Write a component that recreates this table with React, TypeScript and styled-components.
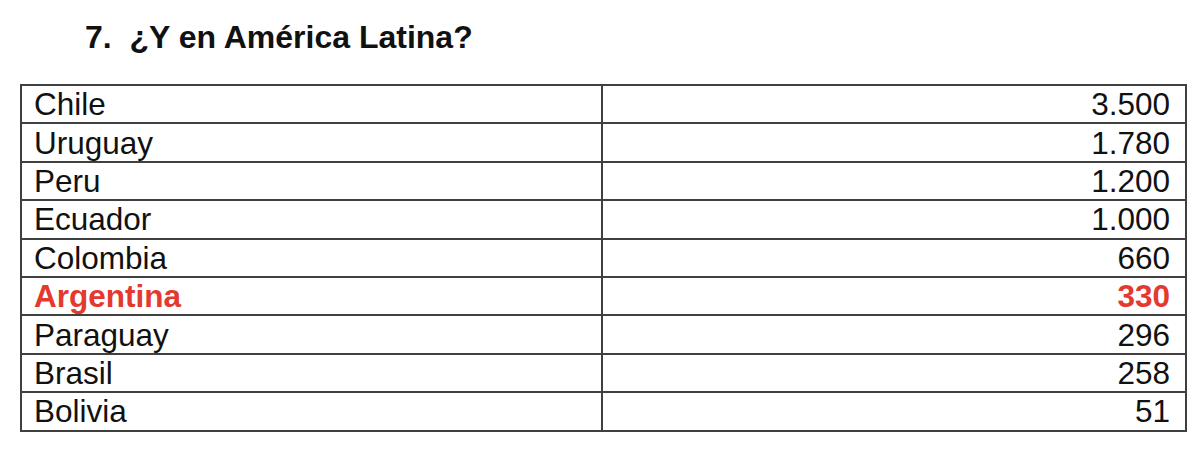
import React from "react";
import styled, { createGlobalStyle } from "styled-components";

const GlobalStyle = createGlobalStyle`
  html, body {
    margin: 0;
    padding: 0;
    background: #fff;
  }
  body {
    font-family: "Liberation Sans", Arial, sans-serif;
    color: #111;
  }
`;

const Page = styled.div`
  width: 1200px;
  height: 455px;
  padding: 19px 0 0 20px;
  box-sizing: border-box;
`;

const Title = styled.h2`
  margin: 0 0 29px 0;
  padding-left: 65px;
  font-size: 32px;
  font-weight: 700;
  line-height: 36px;
  color: #111;
  white-space: pre;
`;

const Table = styled.table`
  width: 1167px;
  border-collapse: collapse;
  table-layout: fixed;
`;

const Row = styled.tr`
  height: 38.4px;
`;

const Cell = styled.td<{ $num?: boolean; $hl?: boolean }>`
  border: 2px solid #404040;
  padding: 0 ${(p) => (p.$num ? "15px" : "0")} 0 ${(p) => (p.$num ? "0" : "12px")};
  width: 50%;
  font-size: 31.5px;
  line-height: 34px;
  text-align: ${(p) => (p.$num ? "right" : "left")};
  color: ${(p) => (p.$hl ? "#e4392f" : "#111")};
  font-weight: ${(p) => (p.$hl ? 700 : 400)};
  vertical-align: middle;
  white-space: nowrap;
`;

const data: { country: string; value: string; hl?: boolean }[] = [
  { country: "Chile", value: "3.500" },
  { country: "Uruguay", value: "1.780" },
  { country: "Peru", value: "1.200" },
  { country: "Ecuador", value: "1.000" },
  { country: "Colombia", value: "660" },
  { country: "Argentina", value: "330", hl: true },
  { country: "Paraguay", value: "296" },
  { country: "Brasil", value: "258" },
  { country: "Bolivia", value: "51" },
];

export default function App() {
  return (
    <>
      <GlobalStyle />
      <Page>
        <Title>{"7.  ¿Y en América Latina?"}</Title>
        <Table>
          <tbody>
            {data.map((d) => (
              <Row key={d.country}>
                <Cell $hl={d.hl}>{d.country}</Cell>
                <Cell $num $hl={d.hl}>
                  {d.value}
                </Cell>
              </Row>
            ))}
          </tbody>
        </Table>
      </Page>
    </>
  );
}
